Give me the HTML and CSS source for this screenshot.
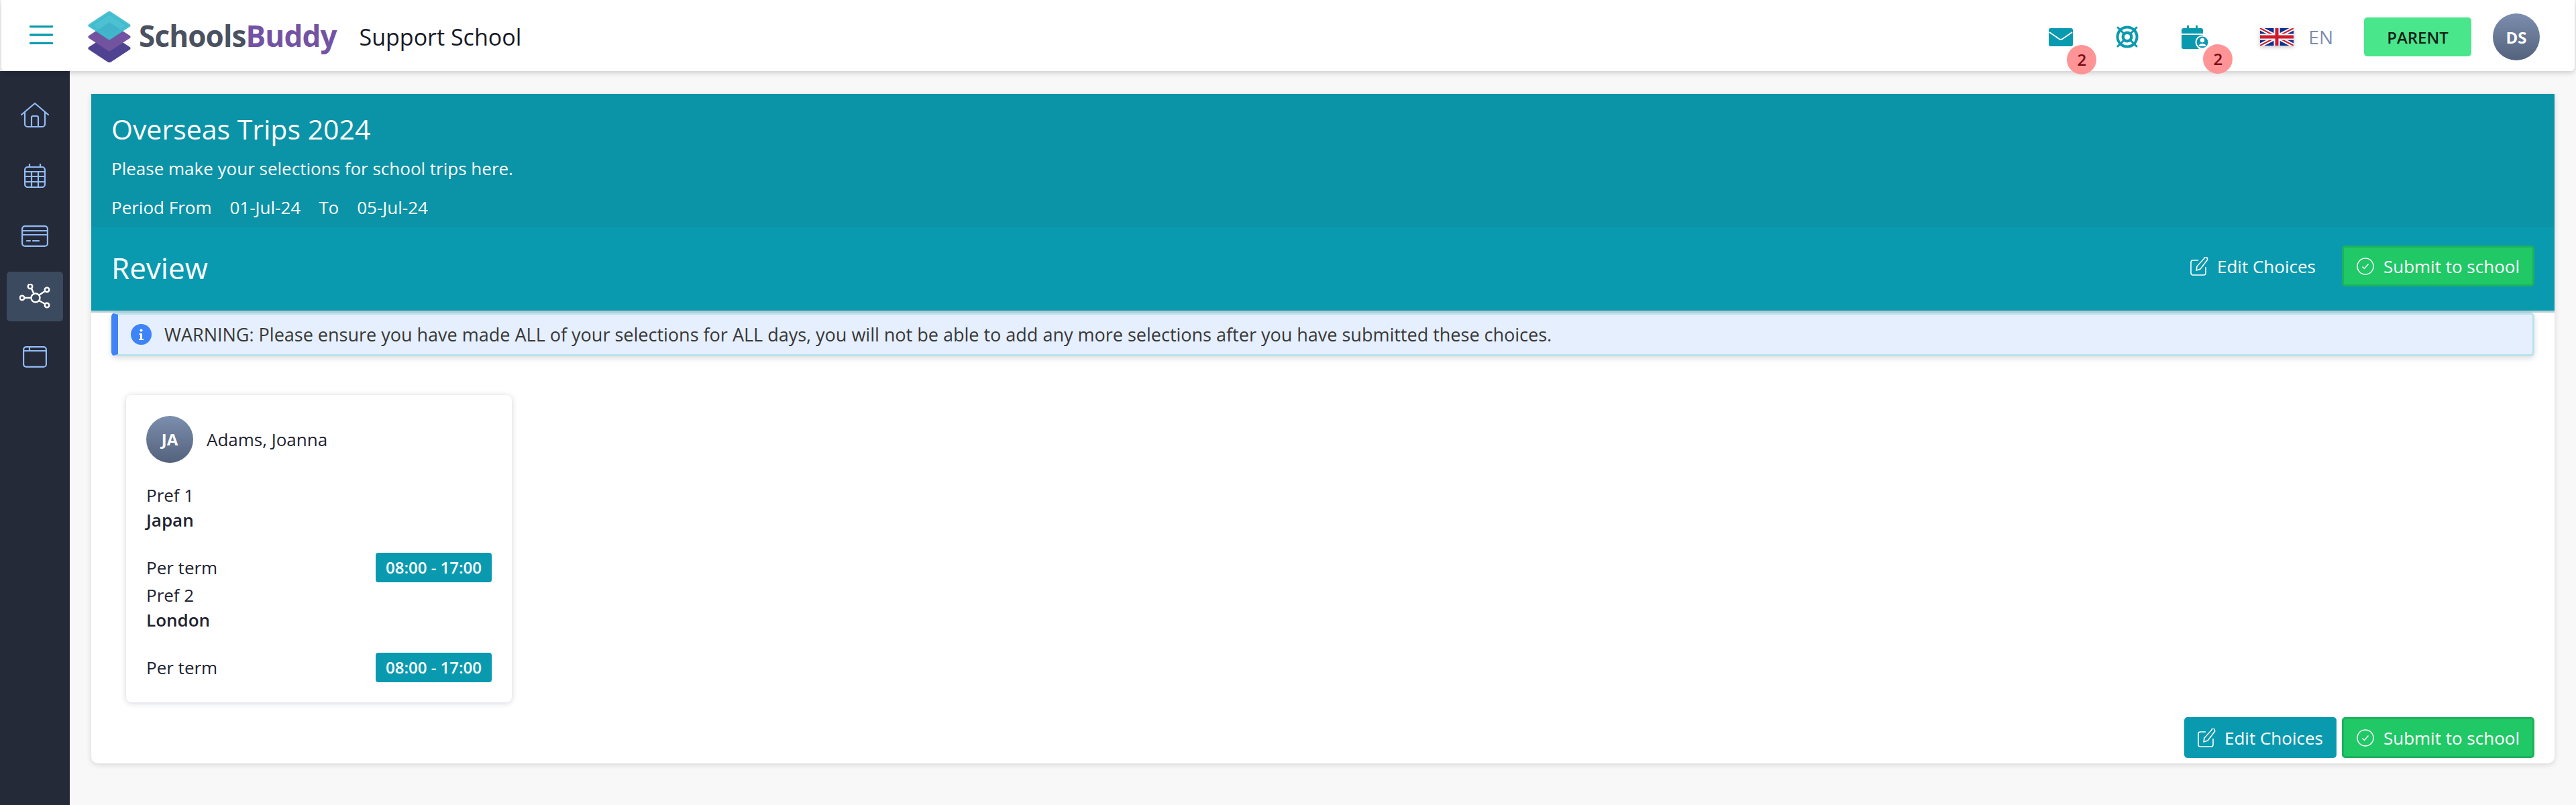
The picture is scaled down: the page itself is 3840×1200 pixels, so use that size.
FILE: index.html
```html
<!DOCTYPE html>
<html lang="en">
<head>
<meta charset="utf-8">
<title>Overseas Trips 2024</title>
<link rel="stylesheet" href="styles.css">
</head>
<body>
<header class="topbar">
  <div class="brand">
    <svg class="burger" width="35" height="28" viewBox="0 0 35 28"><path d="M1.5 1.5h32M1.5 14h32M1.5 26.500h32" fill="none" stroke="#0a9ab0" stroke-width="3.400" stroke-linecap="round"/></svg>
    <svg class="logo-mark" width="64" height="76" viewBox="0 0 64 76">
      <path d="M32 36 61 55 32 74 3 55Z" fill="#4f4391" stroke="#4f4391" stroke-width="5" stroke-linejoin="round"/>
      <path d="M32 19 61 38 32 57 3 38Z" fill="#72539f" stroke="#72539f" stroke-width="5" stroke-linejoin="round"/>
      <path d="M32 2 61 21 32 40 3 21Z" fill="#3dbccd" fill-opacity=".92" stroke="#3dbccd" stroke-opacity=".92" stroke-width="5" stroke-linejoin="round"/>
    </svg>
    <div class="logo-text"><span class="logo-a">Schools</span><span class="logo-b">Buddy</span></div>
    <div class="school">Support School</div>
  </div>
  <div class="tools">
    <div class="tool tool-mail">
      <svg width="36" height="27" viewBox="0 0 36 27"><rect width="36" height="27" rx="3" fill="#0a9ab0"/><path d="M1 6 15.500 16q2.500 1.500 5 0L35 6" fill="none" stroke="#fff" stroke-width="2"/></svg>
      <span class="count count-mail">2</span>
    </div>
    <div class="tool tool-help">
      <svg width="36" height="36" viewBox="0 0 36 36" fill="none" stroke="#0a9ab0"><circle cx="18" cy="18" r="14.500" stroke-width="4"/><circle cx="18" cy="18" r="6.300" stroke-width="4.400"/><path d="M4 4l9.500 9.500M32 4l-9.500 9.500M4 32l9.500-9.500M32 32l-9.500-9.500" stroke-width="3" stroke-linecap="round"/></svg>
    </div>
    <div class="tool tool-cal">
      <svg width="40" height="36" viewBox="0 0 40 36"><path d="M3 5h5V2a1.500 1.500 0 0 1 3 0v3h10V2a1.500 1.500 0 0 1 3 0v3h5a3 3 0 0 1 3 3v5H0V8a3 3 0 0 1 3-3Z" fill="#0a9ab0"/><path d="M0 15h32v3a11 11 0 0 0-6 18H3a3 3 0 0 1-3-3Z" fill="#0a9ab0"/><circle cx="31" cy="26" r="9.500" fill="#0a9ab0" stroke="#fff" stroke-width="2"/><circle cx="31" cy="23" r="3.200" fill="#fff"/><path d="M25.500 32a5.500 4 0 0 1 11 0Z" fill="#fff"/></svg>
      <span class="count count-cal">2</span>
    </div>
    <svg class="flag" width="50" height="26" viewBox="0 0 50 26">
      <rect width="50" height="26" fill="#0b2f8f"/>
      <path d="M0 0 50 26M50 0 0 26" stroke="#fff" stroke-width="6"/>
      <path d="M0 0 50 26M50 0 0 26" stroke="#cf1a2c" stroke-width="2"/>
      <path d="M25 0v26M0 13h50" stroke="#fff" stroke-width="9"/>
      <path d="M25 0v26M0 13h50" stroke="#cf1a2c" stroke-width="5"/>
    </svg>
    <div class="lang">EN</div>
    <div class="role">PARENT</div>
    <div class="avatar">DS</div>
  </div>
</header>
<div class="layout">
  <nav class="rail">
    <a class="rail-item"><svg width="42" height="38" viewBox="0 0 42 38" fill="none" stroke="#93bbf7" stroke-width="2.200" stroke-linejoin="round" stroke-linecap="round"><path d="M1 18 21 1l20 17M6 14v18a4 4 0 0 0 4 4h22a4 4 0 0 0 4-4V14"/><path d="M16 36V22a2 2 0 0 1 2-2h6a2 2 0 0 1 2 2v14"/></svg></a>
    <a class="rail-item"><svg width="32" height="36" viewBox="0 0 32 36" fill="none" stroke="#93bbf7" stroke-width="2.200"><rect x="1.100" y="5" width="29.800" height="30" rx="4"/><path d="M8 0v5M24 0v5M1 12h30M1 19h30M1 27h30M11 12v23M21 12v23"/></svg></a>
    <a class="rail-item"><svg width="40" height="32" viewBox="0 0 40 32" fill="none" stroke="#93bbf7" stroke-width="2.200" stroke-linecap="round"><rect x="1.100" y="1.100" width="37.800" height="29.800" rx="4"/><path d="M1 8h38M1 14h38M8 23h5M17 23h9"/></svg></a>
    <a class="rail-item rail-item-on"><svg width="46" height="38" viewBox="0 0 46 38" fill="none" stroke="#fff" stroke-width="2.400"><circle cx="24" cy="21" r="6.500"/><circle cx="16" cy="4" r="3.300"/><circle cx="41" cy="9" r="3.300"/><circle cx="4" cy="21" r="3.300"/><circle cx="41" cy="32" r="3.300"/><path d="M18 7l3.500 8M38 11l-9 6M7 21h10.500M38 30l-9-5"/></svg></a>
    <a class="rail-item"><svg width="36" height="32" viewBox="0 0 36 32" fill="none" stroke="#93bbf7" stroke-width="2.200"><rect x="1.100" y="1.100" width="33.800" height="29.800" rx="4"/><path d="M1 7h34M10 1v6"/></svg></a>
  </nav>
  <main class="content">
    <section class="panel">
      <div class="intro">
        <h1 class="intro-title">Overseas Trips 2024</h1>
        <p class="intro-text">Please make your selections for school trips here.</p>
        <p class="period"><span>Period From</span><span>01-Jul-24</span><span>To</span><span>05-Jul-24</span></p>
      </div>
      <div class="stage">
        <h2 class="stage-title">Review</h2>
        <div class="actions">
          <a class="btn btn-plain"><svg class="ico" width="28" height="28" viewBox="0 0 28 28" fill="none" stroke="#fff" stroke-width="1.600" stroke-linejoin="round"><path d="M12 5H4a3 3 0 0 0-3 3v16a3 3 0 0 0 3 3h16a3 3 0 0 0 3-3v-9"/><path d="M9 20l1-6L21 2a2 2 0 0 1 4 0 2 2 0 0 1 0 3L15 18Z"/></svg>Edit Choices</a>
          <a class="btn btn-go"><svg class="ico ico-go" width="26" height="26" viewBox="0 0 26 26" fill="none" stroke="#fff" stroke-width="1.500"><circle cx="13" cy="13" r="12"/><path d="M8.500 13.500l3 3 6-7"/></svg>Submit to school</a>
        </div>
      </div>
      <div class="notice">
        <svg class="notice-ico" width="31" height="31" viewBox="0 0 31 31"><circle cx="15.500" cy="15.500" r="15.500" fill="#3f83f8"/><circle cx="15.500" cy="9.500" r="2" fill="#fff"/><path d="M12.500 14h4.500v8h2v2h-7v-2h2v-6h-1.500Z" fill="#fff"/></svg>
        <span>WARNING: Please ensure you have made ALL of your selections for ALL days, you will not be able to add any more selections after you have submitted these choices.</span>
      </div>
      <div class="pupil">
        <div class="pupil-head"><div class="avatar">JA</div><div class="pupil-name">Adams, Joanna</div></div>
        <div class="pref">Pref 1</div>
        <div class="pref-name">Japan</div>
        <div class="slot"><span>Per term</span><span class="time">08:00 - 17:00</span></div>
        <div class="pref">Pref 2</div>
        <div class="pref-name">London</div>
        <div class="slot"><span>Per term</span><span class="time">08:00 - 17:00</span></div>
      </div>
      <div class="foot">
        <a class="btn btn-teal"><svg class="ico" width="28" height="28" viewBox="0 0 28 28" fill="none" stroke="#fff" stroke-width="1.600" stroke-linejoin="round"><path d="M12 5H4a3 3 0 0 0-3 3v16a3 3 0 0 0 3 3h16a3 3 0 0 0 3-3v-9"/><path d="M9 20l1-6L21 2a2 2 0 0 1 4 0 2 2 0 0 1 0 3L15 18Z"/></svg>Edit Choices</a>
        <a class="btn btn-go"><svg class="ico ico-go" width="26" height="26" viewBox="0 0 26 26" fill="none" stroke="#fff" stroke-width="1.500"><circle cx="13" cy="13" r="12"/><path d="M8.500 13.500l3 3 6-7"/></svg>Submit to school</a>
      </div>
    </section>
  </main>
</div>
</body>
</html>
```
FILE: styles.css
```css
* { box-sizing: border-box; }
html, body { margin: 0; height: 1200px; overflow: hidden; }
body { background: #f8f8f8; font-family: "Open Sans", "Noto Sans", sans-serif; font-size: 26px; color: #1e2330; }

.topbar { position: relative; z-index: 2; display: flex; align-items: center; justify-content: space-between; height: 106px; margin: 0 2px; padding: 4px 52px 0 42px; background: #fff; border-radius: 0 0 6px 6px; box-shadow: 0 2px 8px rgba(0,0,0,.2); }
.brand { display: flex; align-items: center; }
.burger { margin: 0 52px 6px 0; }
.logo-mark { margin-right: 12px; }
.logo-text { margin: 0 34px 4px 0; font-size: 44px; font-weight: 700; letter-spacing: -.85px; line-height: 60px; }
.logo-a { color: #4a5160; }
.logo-b { color: #7353a3; }
.school { font-size: 34px; line-height: 46px; color: #151a26; }
.tools { display: flex; align-items: center; }
.tool { position: relative; display: flex; }
.tool-mail { margin-right: 63px; }
.tool-help { margin-right: 63px; }
.tool-cal { margin-right: 77px; }
.count { position: absolute; width: 44px; height: 44px; border-radius: 50%; background: #ff9497; color: #7a0c14; font-size: 24px; font-weight: 600; line-height: 44px; text-align: center; }
.count-mail { top: 25px; left: 27px; }
.count-cal { top: 29px; left: 32px; }
.flag { margin-right: 22px; box-shadow: 0 2px 6px rgba(0,0,0,.25); }
.lang { margin-right: 46px; font-size: 28px; color: #7f8db0; }
.role { display: flex; align-items: center; justify-content: center; width: 160px; height: 58px; margin-right: 32px; background: #4ae68b; border-radius: 5px; color: #0d2117; font-size: 24px; font-weight: 600; }
.avatar { display: flex; flex: none; align-items: center; justify-content: center; width: 70px; height: 70px; border-radius: 50%; background: linear-gradient(#7c8eae, #53627c); color: #fff; font-size: 24px; font-weight: 700; }

.layout { display: flex; height: 1094px; }
.rail { flex: none; width: 104px; padding: 29px 10px 0; background: #242a38; display: flex; flex-direction: column; gap: 16px; }
.rail-item { display: flex; align-items: center; justify-content: center; height: 74px; border-radius: 5px; }
.rail-item-on { background: #3c4a60; }

.content { flex: 1; padding: 34px 32px 0; }
.panel { background: #fff; border-radius: 0 0 10px 10px; box-shadow: 0 2px 8px rgba(0,0,0,.14); height: 998px; }
.intro { height: 198px; padding: 26px 30px 0; background: #0b93a7; color: #fff; }
.intro-title { margin: 0 0 14px; font-size: 41px; font-weight: 400; line-height: 52px; }
.intro-text { margin: 0 0 20px; line-height: 38px; }
.period { display: flex; gap: 27px; margin: 0; line-height: 38px; }
.stage { display: flex; align-items: center; justify-content: space-between; height: 128px; padding: 0 30px 3px; background: #0a9ab0; border-bottom: 3px solid #b8cdd3; color: #fff; }
.stage-title { margin: 0; font-size: 44px; font-weight: 400; line-height: 60px; }
.actions { display: flex; margin-bottom: 5px; }
.btn { display: flex; align-items: center; height: 61px; padding: 0 20px; border-radius: 5px; color: #fff; white-space: nowrap; }
.ico { margin-right: 12px; }
.ico-go { margin-right: 14px; }
.btn-plain { padding: 0 39px 0 0; }
.btn-teal { background: #0a9ab0; }
.btn-go { background: #20c866; border: 3px solid #1cb25c; padding: 0 19px; }

.notice { display: flex; align-items: center; height: 65px; margin: 0 30px; padding-left: 19px; background: #e5effd; border: 3px solid #b7e3ef; border-left: 10px solid #3f83f8; border-radius: 6px; box-shadow: 0 3px 8px rgba(0,0,0,.14); color: #383838; font-size: 27px; }
.notice-ico { margin-right: 19px; }

.pupil { width: 575px; margin: 58px 0 0 52px; padding: 31px 30px 30px; background: #fff; border-radius: 8px; box-shadow: 0 1px 8px rgba(30,40,70,.2); line-height: 38px; }
.pupil-head { display: flex; align-items: center; gap: 20px; margin-bottom: 29px; }
.pref-name { margin-top: -1px; font-weight: 600; }
.slot { display: flex; align-items: center; justify-content: space-between; margin-top: 30px; }
.time { display: block; width: 173px; height: 44px; background: #0a9ab0; border-radius: 4px; color: #fff; font-size: 24px; font-weight: 600; line-height: 44px; text-align: center; }

.foot { display: flex; justify-content: flex-end; gap: 8px; margin: 22px 30px 0; }
```
